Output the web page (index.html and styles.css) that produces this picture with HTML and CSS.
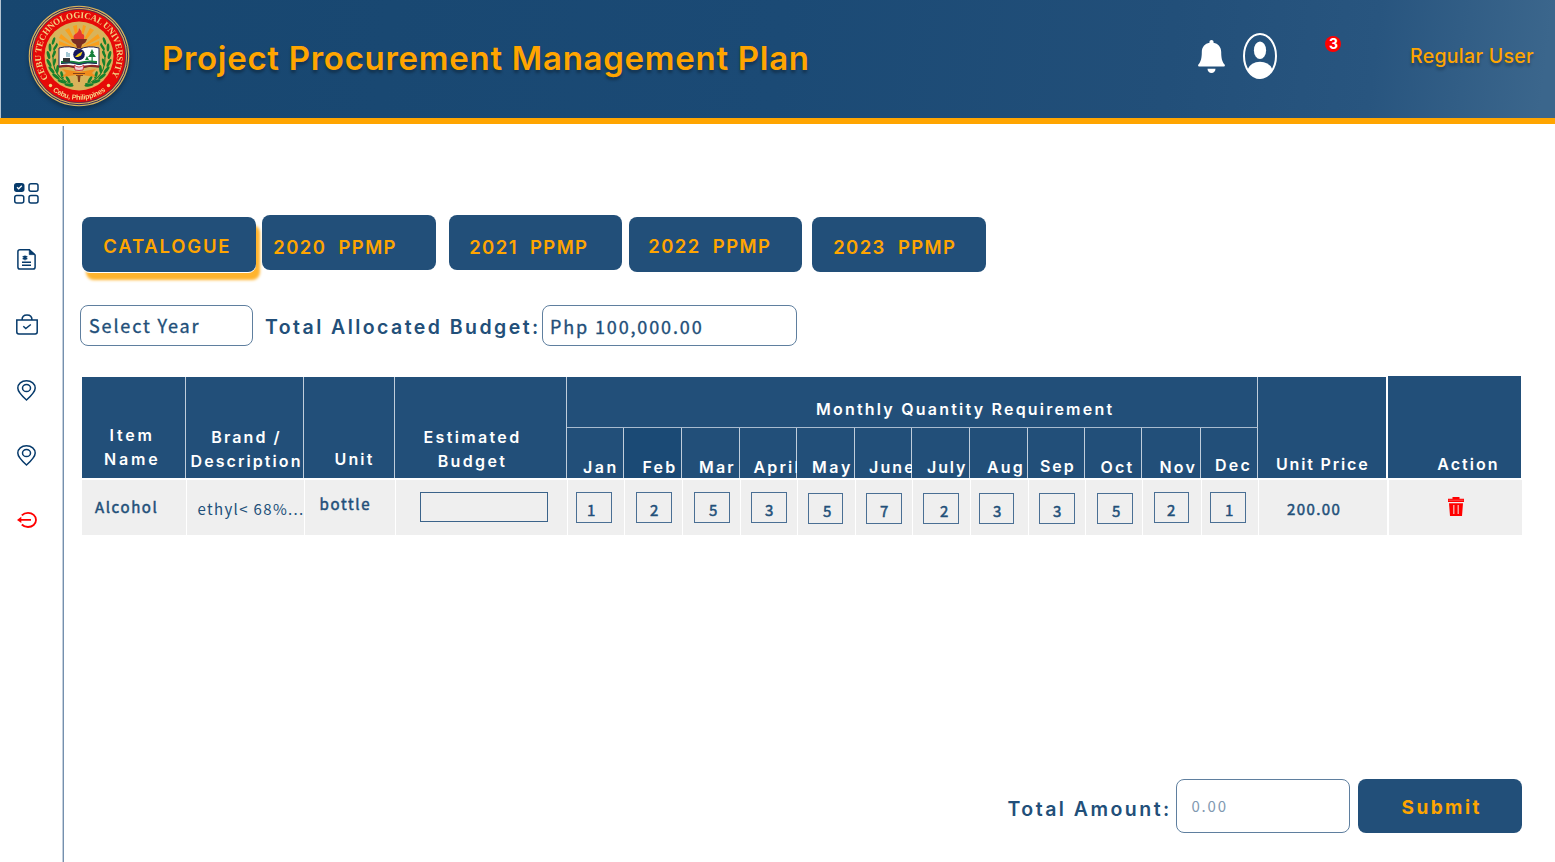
FILE: index.html
```
<!DOCTYPE html>
<html lang="en">
<head>
<meta charset="utf-8">
<title>Project Procurement Management Plan</title>
<link rel="stylesheet" href="styles.css">
</head>
<body>
<header class="header">
  <svg class="logo" viewBox="-54 -54 108 108">
    <defs>
      <path id="arc-top" d="M-30.200 22.800A37.900 37.900 0 1 1 30.200 22.800"/>
      <path id="arc-bottom" d="M-31 31A43.900 43.900 0 0 0 31 31"/>
      <g id="laurel" fill="#17802c">
        <path d="M-6 28C-24 24-31 6-22-13" fill="none" stroke="#17802c" stroke-width="1.1"/>
        <ellipse cx="-10" cy="29" rx="4.6" ry="1.5" transform="rotate(8 -10 29)"/>
        <ellipse cx="-11" cy="23.500" rx="4" ry="1.4" transform="rotate(60 -11 23.500)"/>
        <ellipse cx="-17" cy="25.500" rx="4.600" ry="1.500" transform="rotate(20 -17 25.500)"/>
        <ellipse cx="-17" cy="19" rx="4" ry="1.400" transform="rotate(75 -17 19)"/>
        <ellipse cx="-23" cy="20.500" rx="4.600" ry="1.500" transform="rotate(38 -23 20.500)"/>
        <ellipse cx="-21.500" cy="13" rx="4" ry="1.400" transform="rotate(95 -21.500 13)"/>
        <ellipse cx="-27.500" cy="14" rx="4.400" ry="1.500" transform="rotate(52 -27.500 14)"/>
        <ellipse cx="-30" cy="7" rx="4.400" ry="1.500" transform="rotate(62 -30 7)"/>
        <ellipse cx="-24.500" cy="6" rx="3.600" ry="1.300" transform="rotate(105 -24.500 6)"/>
        <ellipse cx="-30.500" cy="-1" rx="4.200" ry="1.500" transform="rotate(75 -30.500 -1)"/>
        <ellipse cx="-25" cy="-2" rx="3.600" ry="1.300" transform="rotate(115 -25 -2)"/>
        <ellipse cx="-29" cy="-8.500" rx="4" ry="1.400" transform="rotate(88 -29 -8.500)"/>
        <ellipse cx="-23.500" cy="-9" rx="3.600" ry="1.200" transform="rotate(125 -23.500 -9)"/>
        <ellipse cx="-25.500" cy="-15" rx="4" ry="1.300" transform="rotate(108 -25.500 -15)"/>
      </g>
    </defs>
    <circle r="50.300" fill="#d9b35a"/>
    <circle r="48.700" fill="none" stroke="#2b2a63" stroke-width="1"/>
    <circle r="46.700" fill="#e60a08" stroke="#2b2a63" stroke-width=".7"/>
    <circle r="34.500" fill="#d9b35a"/>
    <g fill="#fa9f1c">
      <path d="M0-7-20-18-18-22ZM0-7-14-26-10-28ZM0-7-6-30-2-31ZM0-7 4-31 7-30ZM0-7 11-28 15-26ZM0-7 19-22 21-18ZM0-7-20-11-20-15ZM0-7 20-15 20-11Z"/>
    </g>
    <use href="#laurel"/>
    <use href="#laurel" transform="scale(-1 1)"/>
    <path d="M-17 13 0 16 17 13 13 17 17 21 3 19 0 21-3 19-17 21-13 17Z" fill="#f08c1c"/>
    <path d="M-6 17.500H6M-3 19.500H4" stroke="#7b3b1c" stroke-width=".9"/>
    <path d="M-1.500 20H1.500L.8 26H-.8Z" fill="#7b3b1c"/>
    <path d="M-20-8Q-9-11 0-6.500 9-11 20-8V11Q9 9 0 12.500-9 9-20 11Z" fill="#fff" stroke="#26264f" stroke-width="1"/>
    <path d="M-20 9.500Q-9 7.500 0 11.500 9 7.500 20 9.500V11.500Q9 9.500 0 13.500-9 9.500-20 11.500Z" fill="#8b2525"/>
    <path d="M-18 5Q-8 3.500 0 6 8 3.500 18 5V8Q8 6 0 9-8 6-18 8Z" fill="#16803a"/>
    <path d="M-18 7.500Q-8 5.500 0 8.500 8 5.500 18 7.500" fill="none" stroke="#222263" stroke-width="1"/>
    <path d="M-16 2H-9V6H-16Z" fill="#353535"/>
    <path d="M-12-4V1M-10-3V1" stroke="#6aa5b8" stroke-width="1.200"/>
    <path d="M13-7 15-3H14L17 1H9L12-3H11ZM12.500 1H13.700V5H12.500ZM8 0 10 4H6Z" fill="#16803a"/>
    <circle cy="-1.500" r="5.800" fill="#16165c"/>
    <path d="M-4 1-1-2 3.500-4.500 2-.5-1 1Z" fill="#f3d61f"/>
    <path d="M-5 9Q0 13 5 9L4 14Q0 15-4 14Z" fill="#efcfd2" stroke="#c82c37" stroke-width=".9"/>
    <path d="M-8-17H8Q7-13 3-11.500L2-8H-2L-3-11.500Q-7-13-8-17Z" fill="#7a2f22"/>
    <path d="M-5-17Q-7-21-2-23 0-25 0-28 3-25 3-22 6-22 5-17Z" fill="#e8382d"/>
    <text class="seal-top"><textPath href="#arc-top" textLength="163" startOffset="1">CEBU TECHNOLOGICAL UNIVERSITY</textPath></text>
    <text class="seal-bottom"><textPath href="#arc-bottom" textLength="57" startOffset="6">Cebu, Philippines</textPath></text>
    <circle cx="-28.500" cy="29.500" r="1.700" fill="#f2d67a"/>
    <circle cx="29.500" cy="29.500" r="1.700" fill="#f2d67a"/>
  </svg>
  <h1 class="title">Project Procurement Management Plan</h1>
  <svg class="bell" viewBox="0 0 27 33" fill="#fff">
    <path d="M13.500 0c1.200 0 2 .8 2 1.800v1c4.600.8 7.700 4.400 7.700 9.200 0 6 .8 9.600 3.400 12.500.6.900.3 2.100-1.200 2.100H1.600C.1 26.600-.2 25.400.4 24.500 3 21.600 3.800 18 3.800 12c0-4.800 3.100-8.400 7.700-9.200v-1c0-1 .8-1.800 2-1.800ZM9.500 28.700h8c0 2.500-1.700 4.200-4 4.200s-4-1.700-4-4.200Z"/>
  </svg>
  <svg class="avatar" viewBox="0 0 34 46">
    <ellipse cx="17" cy="23" rx="16" ry="22" fill="none" stroke="#fff" stroke-width="2"/>
    <ellipse cx="17" cy="17.200" rx="6.100" ry="8.800" fill="#fff"/>
    <path d="M4.500 36.500Q8 28.800 17 28.800T29.500 36.500Q24 45.500 17 45.500T4.500 36.500Z" fill="#fff"/>
  </svg>
  <span class="count">3</span>
  <span class="user">Regular User</span>
</header>

<div class="layout">
  <nav class="sidebar">
    <svg width="25" height="21" viewBox="0 0 25 21" fill="none" stroke="#063a6b" stroke-width="1.500">
      <rect x=".75" y=".75" width="9" height="7.500" rx="2" fill="#063a6b"/>
      <rect x="15" y=".75" width="9" height="7.500" rx="2"/>
      <rect x=".75" y="12.500" width="9" height="7.500" rx="2"/>
      <rect x="15" y="12.500" width="9" height="7.500" rx="2"/>
      <path d="M3 4.300 4.700 5.800 7.800 2.800" stroke="#fff" stroke-width="1.300"/>
    </svg>
    <svg width="19" height="21" viewBox="0 0 19 21" fill="none" stroke="#063a6b" stroke-width="1.500">
      <path d="M12.500.75H3Q.9.750.9 2.800V18Q.9 20.100 3 20.100H16Q18.100 20.100 18.100 18V6Z" stroke-linejoin="round"/>
      <path d="M12.300.6V5.600H18Z" fill="#063a6b" stroke-width=".8"/>
      <path d="M5 13.300H14M5 16.200H14"/>
      <path d="M8 6.400V11.200M5.700 7.400 10.300 10.200M10.300 7.400 5.700 10.200" stroke-width="1.400"/>
    </svg>
    <svg width="22" height="21" viewBox="0 0 22 21" fill="none" stroke="#063a6b" stroke-width="1.500">
      <path d="M.8 6.100H21.200V18Q21.200 19.900 19.200 19.900H2.800Q.8 19.900.8 18ZM6 6C6 2.600 8 .9 11 .9S16 2.600 16 6"/>
      <path d="M7.300 12.300 9.800 14.500 14.800 10.500"/>
    </svg>
    <svg width="19" height="21" viewBox="0 0 19 21" fill="none" stroke="#063a6b" stroke-width="1.500">
      <path d="M9.500 20C4 15.200.8 12 .8 8.100.8 3.800 4.500.8 9.500.8S18.200 3.800 18.200 8.100C18.200 12 15 15.200 9.500 20Z"/>
      <ellipse cx="9.500" cy="8" rx="4" ry="3.600"/>
    </svg>
    <svg width="19" height="21" viewBox="0 0 19 21" fill="none" stroke="#063a6b" stroke-width="1.500">
      <path d="M9.500 20C4 15.200.8 12 .8 8.100.8 3.800 4.500.8 9.500.8S18.200 3.800 18.200 8.100C18.200 12 15 15.200 9.500 20Z"/>
      <ellipse cx="9.500" cy="8" rx="4" ry="3.600"/>
    </svg>
    <svg class="logout" width="20" height="16" viewBox="0 0 20 16" fill="none" stroke="red" stroke-width="1.800">
      <path d="M4.800 3.400C6.500 1.700 8.500.9 11 .9 15.500.9 19 4 19 8S15.500 15 11 15C8.500 15 6.500 14.200 4.800 12.500M3 7.900H14"/>
      <path d="M0 7.900 4.300 4.800V11Z" fill="red" stroke="none"/>
    </svg>
  </nav>

  <main class="main">
    <div class="tabs">
      <button class="tab tab-catalogue">CATALOGUE</button>
      <button class="tab tab-2020">2020  PPMP</button>
      <button class="tab tab-2021">2021  PPMP</button>
      <button class="tab tab-2022">2022  PPMP</button>
      <button class="tab tab-2023">2023  PPMP</button>
    </div>

    <div class="filters">
      <div class="field year">Select Year</div>
      <span class="label">Total Allocated Budget:</span>
      <div class="field budget">Php 100,000.00</div>
    </div>

    <section class="table">
      <div class="grid head">
        <div class="th tall item"><span>Item<br>Name</span></div>
        <div class="th tall brand"><span>Brand /<br>Description</span></div>
        <div class="th tall unit"><span>Unit</span></div>
        <div class="th tall est"><span>Estimated<br>Budget</span></div>
        <div class="th monthly"><span>Monthly Quantity Requirement</span></div>
        <div class="th tall price"><span>Unit Price</span></div>
        <div class="th tall action"><span>Action</span></div>
        <div class="th month jan"><span>Jan</span></div>
        <div class="th month feb"><span>Feb</span></div>
        <div class="th month mar"><span>Mar</span></div>
        <div class="th month apr"><span>April</span></div>
        <div class="th month may"><span>May</span></div>
        <div class="th month jun"><span>June</span></div>
        <div class="th month jul"><span>July</span></div>
        <div class="th month aug"><span>Aug</span></div>
        <div class="th month sep"><span>Sep</span></div>
        <div class="th month oct"><span>Oct</span></div>
        <div class="th month nov"><span>Nov</span></div>
        <div class="th month dec"><span>Dec</span></div>
      </div>
      <div class="grid row">
        <div class="td name">Alcohol</div>
        <div class="td desc">ethyl&lt; 68%...</div>
        <div class="td measure">bottle</div>
        <div class="td"><div class="estimate"></div></div>
        <div class="td"><div class="qty q-jan">1</div></div>
        <div class="td"><div class="qty q-feb">2</div></div>
        <div class="td"><div class="qty q-mar">5</div></div>
        <div class="td"><div class="qty q-apr">3</div></div>
        <div class="td"><div class="qty q-may">5</div></div>
        <div class="td"><div class="qty q-jun">7</div></div>
        <div class="td"><div class="qty q-jul">2</div></div>
        <div class="td"><div class="qty q-aug">3</div></div>
        <div class="td"><div class="qty q-sep">3</div></div>
        <div class="td"><div class="qty q-oct">5</div></div>
        <div class="td"><div class="qty q-nov">2</div></div>
        <div class="td"><div class="qty q-dec">1</div></div>
        <div class="td cost">200.00</div>
        <div class="td remove">
          <svg width="16" height="19" viewBox="0 0 16 19" fill="red">
            <path d="M4.500 0H11.500V1.700H16V5H0V1.700H4.500ZM1 6.200H15L14 19H2Z"/>
            <path d="M5.800 8V17M10.200 8V17" stroke="#f6b5b5" stroke-width="1.300"/>
            <path d="M.5 3.200H15.500" stroke="#f88" stroke-width=".6"/>
          </svg>
        </div>
      </div>
    </section>

    <footer class="totals">
      <span class="label">Total Amount:</span>
      <div class="field amount">0.00</div>
      <button class="submit">Submit</button>
    </footer>
  </main>
</div>
</body>
</html>
```
FILE: styles.css
```
* { box-sizing: border-box; }
body {
  margin: 0;
  width: 1555px;
  height: 862px;
  overflow: hidden;
  background: #fff;
  color: #224f79;
  font-family: Inter, "Liberation Sans", sans-serif;
}
svg { display: block; flex: none; }

.header {
  display: flex;
  align-items: flex-start;
  height: 124px;
  border-bottom: 6px solid #ffa500;
  background: linear-gradient(90deg, #b4c4d2 1px, transparent 1px),
    linear-gradient(97deg, #17466f 0%, #1b4a75 50%, #224f79 75%, #28557f 88%, #3b668c 99%);
}
.logo { width: 108px; height: 108px; margin: 2px 0 0 25px; filter: drop-shadow(0 3px 2px rgba(0,0,0,.3)); }
.seal-top { font: bold 9px "Liberation Serif", serif; fill: #f3d283; }
.seal-bottom { font: bold 7.200px "Liberation Sans", sans-serif; fill: #f6d98a; }
.title {
  width: 660px;
  margin: 37.500px 0 0 28.900px;
  font-size: 33px;
  font-weight: 600;
  line-height: 40px;
  letter-spacing: .720px;
  white-space: nowrap;
  color: #ffa500;
  text-shadow: 0 3px 3px rgba(0,0,0,.3);
}
.bell { width: 27px; height: 33px; margin: 40px 0 0 376.300px; }
.avatar { width: 34px; height: 46px; margin: 32.500px 0 0 17.800px; }
.count {
  width: 16px;
  height: 16px;
  margin: 35.500px 0 0 48.500px;
  border-radius: 50%;
  background: red;
  color: #fff;
  font-size: 14px;
  font-weight: 700;
  line-height: 16.500px;
  text-align: center;
}
.user {
  margin: 43.700px 0 0 68.500px;
  font-size: 19.500px;
  font-weight: 500;
  line-height: 24px;
  letter-spacing: .300px;
  white-space: nowrap;
  color: #ffa500;
  text-shadow: 0 3px 3px rgba(0,0,0,.3);
}

.layout { display: flex; height: 738px; }
.sidebar {
  display: flex;
  flex-direction: column;
  align-items: center;
  gap: 44.500px;
  width: 64px;
  margin-top: 2px;
  padding: 57px 10px 0 0;
  border-right: 1px solid #7590ae;
  box-shadow: inset -1px 0 0 #c3cfdc;
}
.logout { margin-top: 1px; }
.main { display: flex; flex-direction: column; flex: 1; padding: 91px 33px 0 18px; }

.tabs { display: flex; align-items: flex-start; height: 58px; }
.tab {
  width: 173.700px;
  height: 55px;
  margin: 0;
  padding: 0;
  border: 0;
  border-radius: 8px;
  background: #224f79;
  color: #ffa500;
  font: 600 18.500px/24px Inter, sans-serif;
  letter-spacing: 1.400px;
  text-align: left;
  white-space: pre;
}
.tab-catalogue { margin-top: 2.400px; padding: 2px 0 0 21.300px; letter-spacing: 1.790px; box-shadow: 0 1px 0 #fff, 4px 8px 3px #ffb42e; }
.tab-2020 { margin-left: 6.300px; padding: 8px 0 0 11.300px; }
.tab-2021 { margin-left: 13px; padding: 8px 0 0 20.500px; }
.tab-2022 { margin: 2.400px 0 0 6.300px; padding: 3px 0 0 19.700px; }
.tab-2023 { margin: 1.500px 0 0 9.500px; padding: 5px 0 0 21.300px; }

.filters { display: flex; align-items: flex-start; margin: 32px 0 0 -2px; }
.field {
  border: 1px solid #5f7f9f;
  border-radius: 8px;
  font-family: "Noto Sans CJK JP", sans-serif;
  font-size: 18px;
  line-height: 24px;
  white-space: nowrap;
  -webkit-text-stroke: .350px currentColor;
}
.year { width: 173px; height: 41px; padding: 6.500px 0 0 8px; letter-spacing: 1.840px; }
.budget { width: 255px; height: 41px; margin-left: 2px; padding: 7.500px 0 0 7px; letter-spacing: 1.860px; }
.label { font-size: 19.500px; font-weight: 600; line-height: 24px; letter-spacing: 2.440px; white-space: nowrap; }
.filters .label { width: 275px; margin: 10px 0 0 12px; }

.table { margin-top: 31px; }
.grid {
  display: grid;
  width: 1439px;
  grid-template-columns: 104px 118px 91px 172px 57px 58px 58px 57px 58px 57px 58px 58px 57px 57px 59px 57px 130px 133px;
}
.head { grid-template-rows: 51px 50px; color: #fff; }
.th {
  display: flex;
  align-items: flex-start;
  border-right: 1px solid #c0cddb;
  background: #224f79;
  font-size: 16px;
  font-weight: 600;
  line-height: 24px;
  letter-spacing: 2.150px;
  text-align: center;
  white-space: nowrap;
}
.tall { grid-row: 1 / 3; }
.monthly { grid-column: 5 / 17; padding: 20px 0 0 249px; border-bottom: 1px solid #a9bbcf; letter-spacing: 2.210px; }
.item { padding: 46px 0 0 22px; letter-spacing: 2.800px; }
.brand { padding: 48px 0 0 4.500px; letter-spacing: 2.080px; }
.unit { padding: 70px 0 0 30.500px; }
.est { padding: 48px 0 0 28.500px; letter-spacing: 2.350px; }
.price { grid-column: 17; padding: 75px 0 0 18px; letter-spacing: 1.830px; border-right: 2px solid #fff; }
.action { grid-column: 18; margin-top: -1px; padding: 76px 0 0 49.300px; letter-spacing: 2.040px; border-right: 0; }
.month { padding-top: 27px; }
.jan { grid-column: 5; padding-left: 16px; letter-spacing: 2.500px; }
.feb { padding-left: 18.500px; background: #1b4a75; }
.mar { padding-left: 17px; }
.apr { padding-left: 13.500px; }
.may { padding-left: 15px; letter-spacing: 2.600px; }
.jun { padding-left: 14px; }
.jul { padding-left: 15px; letter-spacing: 1.870px; }
.aug { padding-left: 17px; letter-spacing: 2.200px; }
.sep { padding: 26px 0 0 12px; letter-spacing: 1.900px; }
.oct { padding-left: 15.500px; }
.nov { padding-left: 17.500px; letter-spacing: 2.200px; }
.dec { padding: 25px 0 0 14px; letter-spacing: 2.200px; }

.row { height: 55px; margin-top: 2px; width: 1440px; background: #efefef; font-family: "Noto Sans CJK JP", sans-serif; font-size: 15px; line-height: 24px; }
.td { border-left: 1px solid #fff; white-space: nowrap; -webkit-text-stroke: .500px currentColor; }
.td:first-child { border-left: 0; }
.name { padding: 15px 0 0 13px; letter-spacing: 1.600px; }
.desc { padding: 17px 0 0 10.500px; letter-spacing: 1.340px; -webkit-text-stroke: 0; }
.measure { padding: 12px 0 0 14.500px; letter-spacing: 1.700px; }
.cost { padding: 17px 0 0 28px; letter-spacing: 1.400px; }
.remove { padding: 17px 0 0 59px; margin-left: -1px; border-left-width: 2px; }
.estimate { width: 128px; height: 30px; margin: 12px 0 0 24px; border: 1px solid #3b638a; }
.qty { width: 36px; height: 31px; margin: 12px 0 0 10px; padding: 4.500px 0 0 13px; border: 1px solid #4a6f94; }
.q-jan { margin-left: 8px; padding-left: 10px; }
.q-feb { margin-left: 11px; }
.q-mar { margin-left: 11px; padding-left: 14px; }
.q-apr { width: 35.500px; padding-top: 5px; }
.q-may { width: 35px; margin-top: 13px; padding-left: 14px; }
.q-jun { margin-top: 13px; }
.q-jul { margin-top: 13px; padding-left: 16px; }
.q-aug { width: 35px; margin: 13px 0 0 8px; }
.q-sep { margin: 13px 0 0 10px; padding-top: 5px; }
.q-oct { margin: 13px 0 0 11px; padding-left: 14px; }
.q-nov { width: 35px; margin-left: 11px; padding: 5px 0 0 12px; }
.q-dec { margin-left: 8px; padding: 5px 0 0 14px; }

.totals { display: flex; justify-content: flex-end; align-items: flex-start; margin: auto 0 29px; }
.totals .label { width: 168.500px; margin-top: 17.500px; letter-spacing: 2.480px; }
.amount { width: 174px; height: 54px; padding: 13.500px 0 0 14.500px; font-size: 15px; letter-spacing: 1.790px; color: #8199b1; -webkit-text-stroke: 0; }
.submit {
  width: 164px;
  height: 54px;
  margin-left: 8px;
  padding: 3px 0 0 43.500px;
  border: 0;
  border-radius: 8px;
  background: #224f79;
  color: #ffa500;
  font: 700 19px/24px Inter, sans-serif;
  letter-spacing: 2.450px;
  text-align: left;
}
```
